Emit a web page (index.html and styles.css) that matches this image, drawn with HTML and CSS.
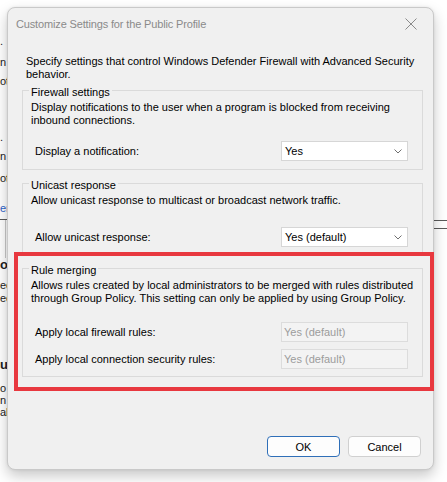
FILE: index.html
```html
<!DOCTYPE html>
<html>
<head>
<meta charset="utf-8">
<link rel="stylesheet" href="styles.css">
</head>
<body>
<div class="desktop">
  <div class="frag" style="top:36px">.</div>
  <div class="frag" style="top:57px">n</div>
  <div class="frag" style="top:76px">ot</div>
  <div class="frag" style="top:132px">.</div>
  <div class="frag" style="top:151px">n</div>
  <div class="frag" style="top:173px">ot</div>
  <div class="frag link" style="top:203px">er</div>
  <div class="hline left" style="top:219px"></div>
  <div class="vline" style="top:220px"></div>
  <div class="hline right" style="top:220px"></div>
  <div class="hline right" style="top:228px"></div>
  <div class="frag bold" style="top:258px">o</div>
  <div class="frag" style="top:280px">ec</div>
  <div class="frag" style="top:293px">ec</div>
  <div class="frag bold" style="top:358px">ul</div>
  <div class="frag" style="top:383px">o</div>
  <div class="frag" style="top:395px">n</div>
  <div class="frag" style="top:407px">al</div>
</div>

<div class="dialog">
  <div class="titlebar">
    <span class="title">Customize Settings for the Public Profile</span>
    <svg class="close" width="12" height="12" viewBox="0 0 12 12"><path d="M0.5 0.5 L11.5 11.5 M11.5 0.5 L0.5 11.5" stroke="#8a8a8a" stroke-width="1" fill="none"/></svg>
  </div>
  <div class="content">
    <p class="intro">Specify settings that control Windows Defender Firewall with Advanced Security<br>behavior.</p>

    <fieldset class="group g1">
      <legend>Firewall settings</legend>
      <p class="desc">Display notifications to the user when a program is blocked from receiving<br>inbound connections.</p>
      <div class="row r1">
        <span class="label">Display a notification:</span>
        <div class="select"><span>Yes</span><svg class="chev" width="8" height="5" viewBox="0 0 8 5"><path d="M0.5 0.5 L4 4 L7.5 0.5" stroke="#707070" fill="none"/></svg></div>
      </div>
    </fieldset>

    <fieldset class="group g2">
      <legend>Unicast response</legend>
      <p class="desc">Allow unicast response to multicast or broadcast network traffic.</p>
      <div class="row r2">
        <span class="label">Allow unicast response:</span>
        <div class="select"><span>Yes (default)</span><svg class="chev" width="8" height="5" viewBox="0 0 8 5"><path d="M0.5 0.5 L4 4 L7.5 0.5" stroke="#707070" fill="none"/></svg></div>
      </div>
    </fieldset>

    <fieldset class="group g3">
      <legend>Rule merging</legend>
      <p class="desc">Allows rules created by local administrators to be merged with rules distributed<br>through Group Policy. This setting can only be applied by using Group Policy.</p>
      <div class="row r3">
        <span class="label">Apply local firewall rules:</span>
        <div class="input disabled">Yes (default)</div>
      </div>
      <div class="row r4">
        <span class="label">Apply local connection security rules:</span>
        <div class="input disabled">Yes (default)</div>
      </div>
    </fieldset>
  </div>
  <div class="buttons">
    <button class="btn primary">OK</button>
    <button class="btn">Cancel</button>
  </div>
</div>

<div class="highlight"></div>
</body>
</html>
```

FILE: styles.css
```css
html, body {
  margin: 0;
  padding: 0;
}
body {
  width: 447px;
  height: 482px;
  background: #ffffff;
  position: relative;
  overflow: hidden;
  font-family: "Liberation Sans", Arial, sans-serif;
  font-size: 11px;
  color: #000;
}

.desktop {
  position: absolute;
  inset: 0;
}
.frag {
  position: absolute;
  left: 0;
  font-size: 11px;
  line-height: 11px;
  color: #222;
}
.frag.link { color: #2a62c9; }
.frag.bold { font-weight: bold; font-size: 13px; line-height: 13px; }
.hline {
  position: absolute;
  height: 1px;
  background: #5a5a5a;
}
.hline.left { left: 0; width: 10px; }
.hline.right { left: 430px; width: 17px; }
.vline {
  position: absolute;
  left: 5px;
  width: 1px;
  height: 38px;
  background: #c8c8c8;
}

.dialog {
  position: relative;
  margin: 7px 0 0 7px;
  width: 427px;
  height: 463px;
  box-sizing: border-box;
  background: #f0f0f0;
  border: 1px solid #c9c9c9;
  border-radius: 8px;
  box-shadow: 0 6px 14px rgba(0, 0, 0, 0.22), 0 0 3px rgba(0, 0, 0, 0.08);
  display: flex;
  flex-direction: column;
}

.titlebar {
  height: 31px;
  display: flex;
  align-items: center;
  justify-content: space-between;
  padding: 0 16px 0 8px;
}
.title {
  font-family: "Liberation Sans", Arial, sans-serif;
  font-size: 11px;
  letter-spacing: -0.15px;
  color: #8a8a8a;
}
.close {
  display: block;
}

.content {
  padding: 16px 10px 0 14px;
}
.intro {
  margin: 0 0 0 4px;
  line-height: 13px;
  white-space: nowrap;
}

.group {
  margin: 1px 0 0 0;
  padding: 2px 14px 7px 8px;
  border: 1px solid #dadada;
  border-radius: 0;
  min-width: 0;
}
.group legend {
  padding: 4px 2px 0 2px;
  margin-left: -2px;
  line-height: 13px;
}
.g1 { padding-bottom: 8px; }
.g2, .g3 { margin-top: 5px; }

.desc {
  margin: 0;
  line-height: 13px;
  white-space: nowrap;
}

.row {
  display: flex;
  align-items: center;
  justify-content: space-between;
  height: 20px;
}
.label {
  margin-left: 4px;
}
.r1 { margin-top: 14px; }
.r2 { margin-top: 20px; }
.r3 { margin-top: 17px; }
.r4 { margin-top: 7px; }

.select, .input {
  width: 127px;
  height: 20px;
  box-sizing: border-box;
  border: 1px solid #d6d6d6;
  background: #ffffff;
  display: flex;
  align-items: center;
  justify-content: space-between;
  padding: 0 5px 0 3px;
}
.input.disabled {
  background: #f3f3f3;
  border-color: #dcdcdc;
  color: #9c9c9c;
  padding-left: 2px;
}
.chev { display: block; }

.buttons {
  margin-top: auto;
  display: flex;
  justify-content: flex-end;
  gap: 8px;
  padding: 0 12px 12px 0;
}
.btn {
  width: 73px;
  height: 21px;
  box-sizing: border-box;
  font-family: "Liberation Sans", Arial, sans-serif;
  font-size: 11px;
  color: #000;
  background: #fdfdfd;
  border: 1px solid #d0d0d0;
  border-radius: 4px;
  padding: 0;
}
.btn.primary {
  border-color: #2f6fb8;
}

.highlight {
  position: absolute;
  left: 14px;
  top: 252px;
  width: 420px;
  height: 139px;
  box-sizing: border-box;
  border: 4px solid #e8383f;
}
```
